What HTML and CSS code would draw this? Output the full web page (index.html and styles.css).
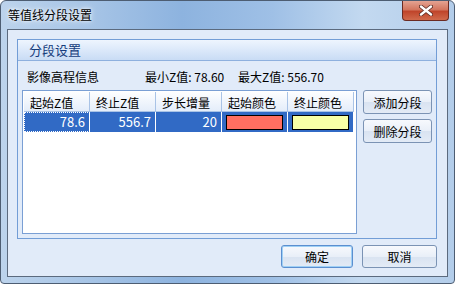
FILE: index.html
```html
<!DOCTYPE html>
<html lang="zh-CN">
<head>
  <meta charset="UTF-8">
  <title>等值线分段设置</title>
  <link rel="stylesheet" href="styles.css">
</head>
<body>
  <div class="window">
    <div class="titlebar">
      <span class="title">等值线分段设置</span>
      <div class="close">
        <svg width="14" height="11" viewBox="0 0 14 11">
          <path d="M2 1.5 L12 9.5 M12 1.5 L2 9.5" stroke="#5a2a22" stroke-width="4" stroke-linecap="round"/>
          <path d="M2 1.5 L12 9.5 M12 1.5 L2 9.5" stroke="#fff" stroke-width="2.4" stroke-linecap="round"/>
        </svg>
      </div>
    </div>

    <div class="client">
      <div class="group">
        <div class="group-head">分段设置</div>
        <div class="group-body">
          <div class="info">
            <span class="info-title">影像高程信息</span>
            <span class="info-min">最小Z值: 78.60</span>
            <span>最大Z值: 556.70</span>
          </div>
          <div class="main">
            <div class="list">
              <div class="row head">
                <div class="cell">起始Z值</div>
                <div class="cell">终止Z值</div>
                <div class="cell">步长增量</div>
                <div class="cell">起始颜色</div>
                <div class="cell">终止颜色</div>
              </div>
              <div class="row selected">
                <div class="cell num focus">78.6</div>
                <div class="cell num">556.7</div>
                <div class="cell num">20</div>
                <div class="cell swatch-cell"><span class="swatch" style="background:#ff6f61"></span></div>
                <div class="cell swatch-cell"><span class="swatch" style="background:#f7ffa6"></span></div>
              </div>
            </div>
            <div class="side">
              <button class="btn">添加分段</button>
              <button class="btn">删除分段</button>
            </div>
          </div>
        </div>
      </div>

      <div class="footer">
        <button class="btn ok">确定</button>
        <button class="btn cancel">取消</button>
      </div>
    </div>
  </div>
</body>
</html>
```

FILE: styles.css
```css
body {
  margin: 0;
  font-family: "Noto Sans CJK SC", "Liberation Sans", sans-serif;
  font-size: 12px;
  background: #fff;
}
.window {
  width: 453px;
  height: 282px;
  border: 1px solid #4d5d72;
  border-radius: 6px 6px 4px 4px;
  background: linear-gradient(90deg, #bcd3ec 0%, #a6c4e6 20%, #8db3df 40%, #9fc0e6 60%, #c3d9f0 80%, #b3cdea 100%);
  display: flex;
  flex-direction: column;
}
.titlebar {
  height: 28px;
  display: flex;
  align-items: flex-start;
  justify-content: space-between;
  padding-left: 7px;
  padding-right: 5px;
}
.title {
  line-height: 27px;
  color: #000;
  text-shadow: 0 0 6px #fff, 0 0 3px #fff;
}
.close {
  width: 45px;
  height: 19px;
  border: 1px solid #6b2b22;
  border-top: none;
  border-radius: 0 0 4px 4px;
  background: linear-gradient(#e4a392 0%, #d3765f 45%, #c0452b 55%, #d06a4c 100%);
  display: flex;
  align-items: center;
  justify-content: center;
}
.client {
  flex: 1;
  margin: 0 6px 6px 6px;
  border: 1px solid #5b6a7e;
  background: #e1ebf9;
  display: flex;
  flex-direction: column;
  padding: 9px 10px 0 9px;
}
.group {
  height: 198px;
  border: 1px solid #729dd6;
  display: flex;
  flex-direction: column;
}
.group-head {
  height: 20px;
  line-height: 20px;
  padding-left: 11px;
  color: #163c7c;
  font-size: 13px;
  background: linear-gradient(#eef5fe, #c9dcf5);
  border-bottom: 1px solid #8eb0de;
}
.group-body {
  flex: 1;
  padding: 0 4px 4px 4px;
  display: flex;
  flex-direction: column;
}
.info {
  height: 29px;
  line-height: 32px;
  padding-left: 5px;
  display: flex;
  color: #000;
}
.info-title {
  width: 118px;
}
.info-min {
  width: 93px;
}
.main {
  flex: 1;
  display: flex;
  gap: 6px;
}
.list {
  width: 335px;
  border: 1px solid #7a9fd4;
  background: #fff;
  padding: 1px 0 1px 1px;
}
.row {
  display: flex;
}
.cell {
  width: 66px;
  border-right: 1px solid #fff;
  padding: 0 4px;
  box-sizing: border-box;
  flex-shrink: 0;
}
.row.head .cell {
  height: 20px;
  line-height: 21px;
  background: linear-gradient(#fdfeff, #e4edfa);
  border-right: 1px solid #a9c3e6;
  border-bottom: 1px solid #a9c3e6;
  padding-left: 6px;
}
.row.selected .cell {
  height: 20px;
  line-height: 20px;
  background: #316ac5;
  color: #fff;
  font-size: 13px;
}
.cell.num {
  text-align: right;
}
.cell.focus {
  outline: 1px dotted #fff;
  outline-offset: -1px;
}
.swatch-cell {
  display: flex;
  align-items: center;
  justify-content: center;
}
.swatch {
  width: 58px;
  height: 15px;
  border: 1px solid #000;
  box-sizing: border-box;
}
.side {
  display: flex;
  flex-direction: column;
  gap: 5px;
}
.btn {
  font-family: inherit;
  font-size: 12px;
  color: #000;
  width: 69px;
  height: 24px;
  padding: 0;
  border: 1px solid #7b93b4;
  border-radius: 3px;
  background: linear-gradient(#f7f9fd 0%, #e9eff8 50%, #d9e3f1 51%, #e3ebf6 100%);
}
.footer {
  display: flex;
  justify-content: flex-end;
  gap: 9px;
  padding-top: 6px;
}
.btn.ok {
  width: 72px;
  height: 23px;
  border-color: #5b8fd0;
  box-shadow: inset 0 0 0 1px #9fd0f5;
}
.btn.cancel {
  width: 75px;
  height: 23px;
}
```
